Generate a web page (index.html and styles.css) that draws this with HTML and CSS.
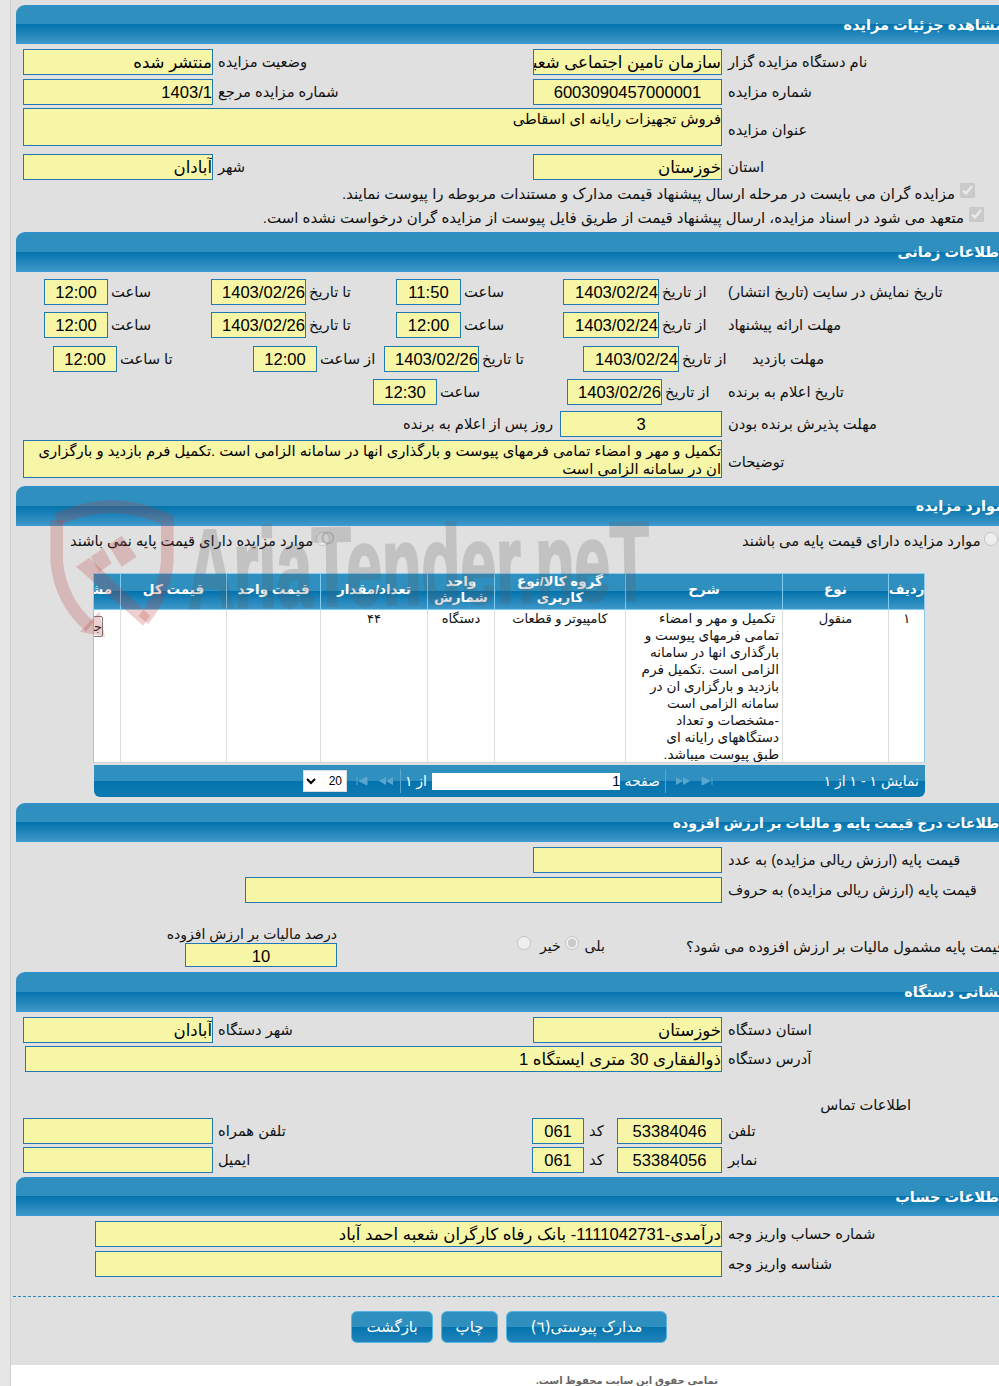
FILE: index.html
```html
<!DOCTYPE html>
<html lang="fa">
<head>
<meta charset="utf-8">
<title>مشاهده جزئیات مزایده</title>
<link rel="stylesheet" href="styles.css">
</head>
<body>
<div class="shell">

  <h2 class="bar first" dir="rtl">مشاهده جزئیات مزایده</h2>
  <div class="row g-main h25 mt5">
    <div class="field">منتشر شده</div><div class="lbl">وضعیت مزایده</div>
    <div class="field">سازمان تامین اجتماعی شعبه آبادان</div><div class="lbl end">نام دستگاه مزایده گزار</div>
  </div>
  <div class="row g-main h24 mt5">
    <div class="field">1403/1</div><div class="lbl">شماره مزایده مرجع</div>
    <div class="field c">6003090457000001</div><div class="lbl end">شماره مزایده</div>
  </div>
  <div class="row g-wide h38 mt5">
    <div class="field area">فروش تجهیزات رایانه ای اسقاطی</div><div class="lbl end mid">عنوان مزایده</div>
  </div>
  <div class="row g-main h25 mt8">
    <div class="field">آبادان</div><div class="lbl">شهر</div>
    <div class="field">خوزستان</div><div class="lbl end">استان</div>
  </div>
  <div class="check c1" dir="rtl"><input type="checkbox" checked disabled>مزایده گران می بایست در مرحله ارسال پیشنهاد قیمت مدارک و مستندات مربوطه را پیوست نمایند.</div>
  <div class="check c2" dir="rtl"><input type="checkbox" checked disabled>متعهد می شود در اسناد مزایده، ارسال پیشنهاد قیمت از طریق فایل پیوست از مزایده گران درخواست نشده است.</div>

  <h2 class="bar" dir="rtl">اطلاعات زمانی</h2>
  <div class="row g-a h24 mt7">
    <div class="field c">12:00</div><div class="lbl s">ساعت</div>
    <div class="field">1403/02/26</div><div class="lbl s">تا تاریخ</div>
    <div class="field c">11:50</div><div class="lbl s">ساعت</div>
    <div class="field">1403/02/24</div><div class="lbl s">از تاریخ</div>
    <div class="lbl end">تاریخ نمایش در سایت (تاریخ انتشار)</div>
  </div>
  <div class="row g-a h25 mt9">
    <div class="field c">12:00</div><div class="lbl s">ساعت</div>
    <div class="field">1403/02/26</div><div class="lbl s">تا تاریخ</div>
    <div class="field c">12:00</div><div class="lbl s">ساعت</div>
    <div class="field">1403/02/24</div><div class="lbl s">از تاریخ</div>
    <div class="lbl end">مهلت ارائه پیشنهاد</div>
  </div>
  <div class="row g-c h24 mt9">
    <div class="field c">12:00</div><div class="lbl s">تا ساعت</div>
    <div class="field c">12:00</div><div class="lbl s">از ساعت</div>
    <div class="field">1403/02/26</div><div class="lbl s">تا تاریخ</div>
    <div class="field">1403/02/24</div><div class="lbl s">از تاریخ</div>
    <div class="lbl">مهلت بازدید</div>
  </div>
  <div class="row g-d h25 mt9">
    <div class="field c">12:30</div><div class="lbl s">ساعت</div>
    <div class="field">1403/02/26</div><div class="lbl s">از تاریخ</div>
    <div class="lbl end">تاریخ اعلام به برنده</div>
  </div>
  <div class="row g-e h24 mt7">
    <div class="lbl flat">روز پس از اعلام به برنده</div>
    <div class="field c">3</div><div class="lbl end">مهلت پذیرش برنده بودن</div>
  </div>
  <div class="row g-wide h38 mt5">
    <div class="field area">تکمیل و مهر و امضاء تمامی فرمهای پیوست و بارگذاری انها در سامانه الزامی است .تکمیل فرم بازدید و بارگزاری ان در سامانه الزامی است</div><div class="lbl end mid">توضیحات</div>
  </div>

  <h2 class="bar mt8" dir="rtl">موارد مزایده</h2>
  <div class="row g-radio">
    <label class="opt" dir="rtl"><input type="radio" name="base" disabled>موارد مزایده دارای قیمت پایه نمی باشند</label>
    <span></span>
    <label class="opt" dir="rtl"><input type="radio" name="base" disabled>موارد مزایده دارای قیمت پایه می باشند</label>
  </div>

  <div class="grid-wrap">
    <table class="grid" dir="rtl">
      <colgroup>
        <col class="c-row"><col class="c-type"><col class="c-desc"><col class="c-group"><col class="c-unit"><col class="c-qty"><col class="c-price"><col class="c-total"><col class="c-more">
      </colgroup>
      <thead>
        <tr>
          <th>ردیف</th><th>نوع</th><th>شرح</th><th>گروه کالا/نوع کاربری</th><th>واحد شمارش</th><th>تعداد/مقدار</th><th>قیمت واحد</th><th>قیمت کل</th><th>مشاهده</th>
        </tr>
      </thead>
      <tbody>
        <tr>
          <td>۱</td>
          <td>منقول</td>
          <td class="desc">&nbsp;تکمیل و مهر و امضاء<br>تمامی فرمهای پیوست و<br>بارگذاری انها در سامانه<br>الزامی است .تکمیل فرم<br>بازدید و بارگزاری ان در<br>سامانه الزامی است<br>-مشخصات و تعداد<br>دستگاههای رایانه ای<br>طبق پیوست میباشد.</td>
          <td>کامپیوتر و قطعات</td>
          <td>دستگاه</td>
          <td>۴۴</td>
          <td></td>
          <td></td>
          <td class="more"><span class="mini">جزئیات</span></td>
        </tr>
      </tbody>
    </table>
  </div>

  <div class="pager">
    <select class="size" dir="rtl"><option>20</option></select>
    <span class="pg-icons">
      <svg width="14" height="10" viewBox="0 0 14 10"><path d="M2 1v8M12 1v8L4 5z" fill="#5aa6cf" stroke="#5aa6cf"/></svg>
      <svg width="16" height="10" viewBox="0 0 16 10"><path d="M8 1v8L1 5zM15 1v8L8 5z" fill="#5aa6cf"/></svg>
    </span>
    <span class="sep"></span>
    <span class="pg-of" dir="rtl">از ۱</span>
    <span class="pg-input">1</span>
    <span class="pg-page" dir="rtl">صفحه</span>
    <span class="sep"></span>
    <span class="pg-icons next">
      <svg width="16" height="10" viewBox="0 0 16 10"><path d="M1 1v8l7-4zM8 1v8l7-4z" fill="#5aa6cf"/></svg>
      <svg width="14" height="10" viewBox="0 0 14 10"><path d="M2 1v8l8-4zM12 1v8" fill="#5aa6cf" stroke="#5aa6cf"/></svg>
    </span>
    <span class="pg-info" dir="rtl">نمایش ۱ - ۱ از ۱</span>
  </div>

  <h2 class="bar short long mt6" dir="rtl">اطلاعات درج قیمت پایه و مالیات بر ارزش افزوده</h2>
  <div class="row g-price1 h25 mt5">
    <div class="field"></div><div class="lbl end">قیمت پایه (ارزش ریالی مزایده) به عدد</div>
  </div>
  <div class="row g-price2 h24 mt5">
    <div class="field"></div><div class="lbl end">قیمت پایه (ارزش ریالی مزایده) به حروف</div>
  </div>
  <div class="row g-tax mt25">
    <div class="stack">
      <div class="lbl flat cap" dir="rtl">درصد مالیات بر ارزش افزوده</div>
      <div class="field c tax">10</div>
    </div>
    <span></span>
    <div class="yesno">
      <label class="yn no" dir="rtl">خیر<input type="radio" name="tax" disabled></label>
      <label class="yn yes" dir="rtl">بلی<input type="radio" name="tax" checked disabled></label>
    </div>
    <div class="lbl flat ask">قیمت پایه مشمول مالیات بر ارزش افزوده می شود؟</div>
  </div>

  <h2 class="bar mt5" dir="rtl">نشانی دستگاه</h2>
  <div class="row g-main h24 mt5">
    <div class="field">آبادان</div><div class="lbl">شهر دستگاه</div>
    <div class="field">خوزستان</div><div class="lbl end">استان دستگاه</div>
  </div>
  <div class="row g-addr h25 mt5">
    <div class="field">ذوالفقاری 30 متری ایستگاه 1</div><div class="lbl end">آدرس دستگاه</div>
  </div>
  <div class="contact" dir="rtl">اطلاعات تماس</div>
  <div class="row g-phone h24 mt3">
    <div class="field"></div><div class="lbl">تلفن همراه</div>
    <div class="field c">061</div><div class="lbl">کد</div>
    <div class="field c">53384046</div><div class="lbl end">تلفن</div>
  </div>
  <div class="row g-phone h25 mt5">
    <div class="field"></div><div class="lbl">ایمیل</div>
    <div class="field c">061</div><div class="lbl">کد</div>
    <div class="field c">53384056</div><div class="lbl end">نمابر</div>
  </div>

  <h2 class="bar short mt5" dir="rtl">اطلاعات حساب</h2>
  <div class="row g-acc h25 mt5">
    <div class="field">درآمدی-1111042731- بانک رفاه کارگران شعبه احمد آباد</div><div class="lbl end">شماره حساب واریز وجه</div>
  </div>
  <div class="row g-acc h24 mt5">
    <div class="field"></div><div class="lbl end">شناسه واریز وجه</div>
  </div>

  <div class="rule"></div>
  <div class="actions" dir="rtl">
    <button class="btn b-docs" type="button">مدارک پیوستی(٦)</button>
    <button class="btn b-print" type="button">چاپ</button>
    <button class="btn b-back" type="button">بازگشت</button>
  </div>
</div>

<footer class="foot" dir="rtl">تمامی حقوق این سایت محفوظ است.</footer>

<svg class="mark" width="700" height="160" viewBox="0 0 700 160" aria-hidden="true">
  <g transform="translate(-10 -5) scale(.3333)">
    <g fill="none" stroke="#b93c3c" stroke-opacity=".24" stroke-width="38">
      <path d="M50 75 Q215 -5 382 75 L382 200 Q372 300 310 375"/>
      <path d="M50 75 L50 200 Q62 320 150 395"/>
    </g>
    <g fill="#b93c3c" fill-opacity=".24">
      <path d="M120 410 L195 425 L178 350Z"/>
      <path d="M108 215 L148 188 L330 362 L310 392Z"/>
      <path d="M152 185 L190 160 L215 205 L178 232Z"/>
      <path d="M205 150 L245 122 L290 185 L245 215Z"/>
    </g>
  </g>
  <text class="mark-text" x="138" y="108" textLength="462" lengthAdjust="spacingAndGlyphs" transform="rotate(-1 138 108)">AriaTender.neT</text>
  <circle cx="278" cy="38" r="5.5" fill="none" stroke="#8f8f8f" stroke-opacity=".45" stroke-width="2"/>
</svg>
</body>
</html>
```
FILE: styles.css
```css
* { box-sizing: border-box; }
html, body { margin: 0; height: 1386px; overflow: hidden; }
body {
  position: relative;
  font-family: "Liberation Sans", "DejaVu Sans", sans-serif;
  font-size: 14.7px;
  color: #111;
  background: linear-gradient(90deg, #e6e6e6 10px, #cfcfcf 10px, #cfcfcf 11px, #e0e0e0 11px);
}
.shell { width: 1100px; height: 1365px; padding-top: 5px; }

.bar {
  margin: 0 0 0 16px;
  height: 40px;
  padding: 0 96px 0 0;
  font-size: 14.5px;
  line-height: 39px;
  font-weight: bold;
  color: #fff;
  white-space: nowrap;
  border-top: 1px solid #2f90cf;
  border-bottom: 1px solid #3a9ad6;
  border-top-left-radius: 9px;
  background: linear-gradient(#2f8fbf 0, #2f8fbf 50%, #0473ad 50%, #3e97c8 100%);
}
.bar.first, .bar.short { height: 39px; line-height: 38px; }
.bar.long { font-size: 14px; }

.row { display: grid; align-items: stretch; }
.h24 { height: 24px; }
.h25 { height: 25px; }
.h38 { height: 38px; }
.mt3 { margin-top: 3px; }
.mt5 { margin-top: 5px; }
.mt6 { margin-top: 6px; }
.mt7 { margin-top: 7px; }
.mt8 { margin-top: 8px; }
.mt9 { margin-top: 9px; }
.mt25 { margin-top: 25px; }

.field {
  direction: rtl;
  overflow: hidden;
  white-space: nowrap;
  border: 1px solid #2279b2;
  background: #f7f5a6;
  color: #000;
  font-size: 16.6px;
  line-height: 25px;
  padding-right: 0;
}
.field.c { text-align: center; }
.field.area {
  font-size: 14.8px;
  line-height: 18px;
  white-space: normal;
  padding: 1px 0 0 4px;
}
.lbl {
  direction: rtl;
  text-align: left;
  white-space: nowrap;
  line-height: 26px;
  padding-left: 5px;
  min-width: 0;
}
.lbl.s { padding-left: 3px; }
.lbl.end { padding-left: 6px; }
.lbl.flat { padding-left: 0; }
.lbl.mid { align-self: center; padding-top: 6px; }

.g-main { padding-left: 23px; grid-template-columns: 190px 320px 189px 1fr; }
.g-wide { padding-left: 23px; grid-template-columns: 699px 1fr; }
.g-a { padding-left: 44px; grid-template-columns: 64px 103px 95px 90px 65px 102px 96px 63px 1fr; }
.g-c { padding-left: 53px; grid-template-columns: 64px 136px 64px 67px 95px 104px 96px 68px 1fr; }
.g-d { padding-left: 373px; grid-template-columns: 64px 130px 95px 60px 1fr; }
.g-e { padding-left: 403px; grid-template-columns: 157px 162px 1fr; }
.g-price1 { padding-left: 533px; grid-template-columns: 189px 1fr; }
.g-price2 { padding-left: 245px; grid-template-columns: 477px 1fr; }
.g-addr { padding-left: 25px; grid-template-columns: 697px 1fr; }
.g-acc { padding-left: 95px; grid-template-columns: 627px 1fr; }
.g-phone { padding-left: 23px; grid-template-columns: 190px 319px 52px 33px 105px 1fr; }
.g-radio { padding-left: 70px; height: 30px; grid-template-columns: 265px 407px 1fr; align-items: center; }
.g-tax { padding-left: 185px; height: 41px; grid-template-columns: 152px 180px 169px 1fr; }

.opt { display: block; text-align: left; white-space: nowrap; line-height: 22px; }
.opt input { width: 14px; height: 14px; margin: 0 0 0 3px; vertical-align: 0; }

.check { font-size: 15px; white-space: nowrap; line-height: 24px; }
.check input { width: 15px; height: 15px; margin: 0 0 0 5px; vertical-align: 1px; }
.c1 { height: 28px; padding: 3px 125px 0 0; }
.c2 { height: 25px; margin-top: -1px; padding: 0 116px 0 0; margin-bottom: 1px; }

.grid-wrap {
  width: 832px;
  height: 190px;
  margin: 17px 0 0 93px;
  overflow: hidden;
  border: 1px solid #8ecbee;
  border-bottom-color: #cfd8de;
  background: #fff;
}
.grid { width: 873px; margin-left: -43px; table-layout: fixed; border-collapse: collapse; }
.c-row { width: 36px; }
.c-type { width: 106px; }
.c-desc { width: 157px; }
.c-group { width: 131px; }
.c-unit { width: 67px; }
.c-qty { width: 107px; }
.c-price { width: 94px; }
.c-total { width: 106px; }
.c-more { width: 69px; }
.grid th {
  height: 35px;
  padding: 0 0 2px;
  font-size: 13.5px;
  line-height: 16px;
  color: #fff;
  border-left: 1px solid #7fcdf2;
  border-bottom: 1px solid #7fcdf2;
  background: linear-gradient(#2f8fbf 0, #2f8fbf 50%, #0473ad 50%, #3e97c8 100%);
}
.grid td {
  height: 153px;
  padding: 0 2px 0;
  vertical-align: top;
  text-align: center;
  font-size: 13px;
  line-height: 17px;
  white-space: nowrap;
  border-left: 1px solid #ddd;
}
.grid td.desc { font-size: 13.6px; text-align: right; padding-right: 3px; }
.grid td.more { text-align: right; padding: 6px 17px 0 0; }
.mini {
  display: inline-block;
  width: 38px;
  height: 21px;
  overflow: hidden;
  text-align: right;
  line-height: 19px;
  border: 1px solid #777;
  border-radius: 2px;
}

.pager {
  display: flex;
  align-items: center;
  width: 831px;
  height: 32px;
  margin: 2px 0 0 94px;
  padding: 0 6px 0 209px;
  color: #fff;
  font-size: 14px;
  border-radius: 0 0 6px 6px;
  background: linear-gradient(#2f8fbf 0, #2f8fbf 50%, #0473ad 50%, #0f7ab2 100%);
}
.size {
  width: 44px;
  height: 22px;
  border: 1px solid #ddd;
  border-radius: 0;
  background-color: #fff;
  color: #000;
  font: 12px "Liberation Sans", sans-serif;
}
.pg-icons { display: flex; flex: none; gap: 9px; width: 39px; margin: 0 6px 0 8px; }
.pg-icons.next { margin: 0 0 0 9px; }
.sep { flex: none; width: 1px; height: 24px; background: #5aa6cf; }
.pg-of { width: 20px; margin-left: 6px; white-space: nowrap; text-align: left; }
.pg-input {
  width: 188px;
  height: 17px;
  margin-left: 5px;
  background: #fff;
  color: #000;
  font-size: 14px;
  line-height: 17px;
  text-align: right;
}
.pg-page { width: 35px; margin: 0 5px; white-space: nowrap; text-align: left; font-size: 14px; }
.pg-info { margin-left: auto; white-space: nowrap; }

.stack { display: flex; flex-direction: column; justify-content: flex-end; }
.cap { font-size: 14px; line-height: 17px; }
.tax { height: 24px; flex: none; }
.yesno { display: flex; gap: 4px; padding-top: 8px; }
.yn { display: block; white-space: nowrap; line-height: 24px; font-size: 14px; }
.yn input { width: 14px; height: 14px; margin-block: 0; margin-inline: 9px 0; vertical-align: 1px; }
.yes input { margin-inline-start: 6px; }
.ask { padding-top: 8px; }

.contact { height: 20px; margin: 24px 0 0 0; padding-right: 189px; line-height: 20px; white-space: nowrap; }

.rule { height: 1px; margin: 21px 0 0 13px; border-top: 1px dashed #2a86ba; }
.actions { display: flex; gap: 8px; width: 667px; height: 32px; margin-top: 14px; }
.btn {
  height: 32px;
  padding: 0 0 1px;
  font: 15px "DejaVu Sans", sans-serif;
  color: #fff;
  border: 1px solid #58b4e2;
  border-radius: 6px;
  background: linear-gradient(#2f8fbf 0, #2f8fbf 50%, #0473ad 50%, #2184ba 100%);
}
.b-docs { width: 161px; }
.b-print { width: 57px; }
.b-back { width: 82px; }

.foot {
  height: 21px;
  margin-left: 11px;
  padding: 10px 281px 0 0;
  background: #fff;
  color: #666;
  font-size: 10px;
  font-weight: bold;
  white-space: nowrap;
  overflow: hidden;
}

.mark { position: absolute; left: 50px; top: 500px; pointer-events: none; }
.mark-text {
  font-family: "Liberation Sans", sans-serif;
  font-size: 112px;
  font-weight: bold;
  fill: #5a5a5a;
  stroke: #5a5a5a;
  stroke-width: 3px;
  opacity: .22;
}
```
